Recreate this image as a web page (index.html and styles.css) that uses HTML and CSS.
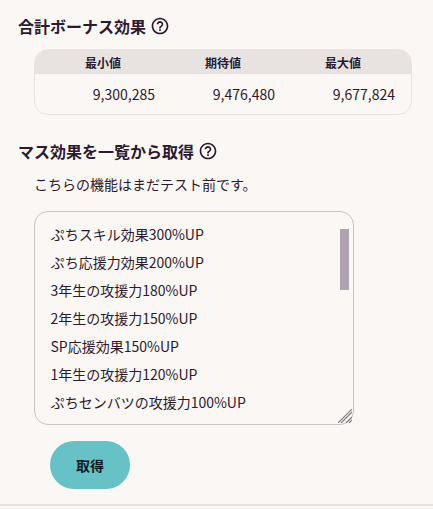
FILE: index.html
```html
<!DOCTYPE html>
<html lang="ja">

<head>
  <meta charset="UTF-8">
  <meta name="viewport" content="width=device-width, initial-scale=1.0">
  <title>ボーナス効果</title>
  <link rel="stylesheet" href="styles.css">
</head>

<body>
  <div class="page">

    <section class="total">
      <h2 class="section-title">合計ボーナス効果
        <svg class="help-icon" viewBox="0 0 24 24"><path d="M11 18h2v-2h-2v2zm1-16C6.48 2 2 6.48 2 12s4.48 10 10 10 10-4.48 10-10S17.52 2 12 2zm0 18c-4.41 0-8-3.59-8-8s3.59-8 8-8 8 3.59 8 8-3.59 8-8 8zm0-14c-2.21 0-4 1.79-4 4h2c0-1.1.9-2 2-2s2 .9 2 2c0 2-3 1.75-3 5h2c0-2.25 3-2.5 3-5 0-2.21-1.79-4-4-4z"/></svg>
      </h2>
      <div class="score-table">
        <div class="score-head">
          <div>最小値</div>
          <div>期待値</div>
          <div>最大値</div>
        </div>
        <div class="score-body">
          <div>9,300,285</div>
          <div>9,476,480</div>
          <div>9,677,824</div>
        </div>
      </div>
    </section>

    <section class="import">
      <h2 class="section-title">マス効果を一覧から取得
        <svg class="help-icon" viewBox="0 0 24 24"><path d="M11 18h2v-2h-2v2zm1-16C6.48 2 2 6.48 2 12s4.48 10 10 10 10-4.48 10-10S17.52 2 12 2zm0 18c-4.41 0-8-3.59-8-8s3.59-8 8-8 8 3.59 8 8-3.59 8-8 8zm0-14c-2.21 0-4 1.79-4 4h2c0-1.1.9-2 2-2s2 .9 2 2c0 2-3 1.75-3 5h2c0-2.25 3-2.5 3-5 0-2.21-1.79-4-4-4z"/></svg>
      </h2>
      <p class="note">こちらの機能はまだテスト前です。</p>
      <div class="list-wrap">
        <textarea class="effect-list" spellcheck="false">ぷちスキル効果300%UP
ぷち応援力効果200%UP
3年生の攻援力180%UP
2年生の攻援力150%UP
SP応援効果150%UP
1年生の攻援力120%UP
ぷちセンバツの攻援力100%UP</textarea>
        <div class="list-thumb"></div>
        <svg class="list-grip" viewBox="0 0 14 14">
          <path d="M0 14L14 0M3 14L14 3M8 14L14 8M11 14L14 11"/>
        </svg>
      </div>
      <button class="fetch-btn">取得</button>
    </section>

  </div>
</body>

</html>
```

FILE: styles.css
```css
* {
  margin: 0;
  padding: 0;
  box-sizing: border-box;
}

body {
  background-color: #fbf7f4;
  color: #2b1a30;
  font-family: "Noto Sans CJK JP", "Noto Sans", sans-serif;
  font-size: 14px;
}

.page {
  height: 506px;
  padding: 14px 0 0 18px;
  border-bottom: 2px solid #e8e3e0;
}

.section-title {
  display: flex;
  align-items: center;
  gap: 4px;
  height: 24px;
  font-size: 16px;
  font-weight: 700;
  line-height: 24px;
}

.help-icon {
  width: 20px;
  height: 20px;
  fill: #2b1a30;
}

.score-table {
  width: 378px;
  margin: 11px 0 0 16px;
  border: 1px solid #e8e3e0;
  border-radius: 14px;
  overflow: hidden;
}

.score-head,
.score-body {
  display: grid;
  grid-template-columns: repeat(3, 120px);
}

.score-head {
  height: 24px;
  background-color: #e8e3e0;
  font-size: 12px;
  font-weight: 700;
  line-height: 26px;
}

.score-head div {
  padding-left: 50px;
}

.score-body {
  height: 40px;
  line-height: 40px;
}

.score-body div {
  text-align: right;
}

.import {
  margin-top: 24px;
}

.note {
  margin: 11px 0 0 16px;
  line-height: 20px;
}

.list-wrap {
  position: relative;
  width: 320px;
  height: 214px;
  margin: 17px 0 0 16px;
}

.effect-list {
  display: block;
  width: 100%;
  height: 100%;
  padding: 8px 16px 8px 15.5px;
  border: 1px solid #c9c2c6;
  border-radius: 14px;
  background: transparent;
  color: inherit;
  font-family: inherit;
  font-size: 14px;
  line-height: 28px;
  outline: none;
  overflow: hidden;
  resize: none;
}

.list-thumb {
  position: absolute;
  top: 18px;
  right: 5px;
  width: 9px;
  height: 61px;
  background-color: #aea3ae;
}

.list-grip {
  position: absolute;
  right: 2px;
  bottom: 2px;
  width: 14px;
  height: 14px;
  fill: none;
  stroke: #7c777c;
  stroke-width: 1.1;
}

.fetch-btn {
  display: block;
  width: 80px;
  height: 48px;
  margin: 16px 0 0 32px;
  border: none;
  border-radius: 24px;
  background-color: #66c2c7;
  color: #111a1f;
  font-family: inherit;
  font-size: 14px;
  font-weight: 700;
}
```
